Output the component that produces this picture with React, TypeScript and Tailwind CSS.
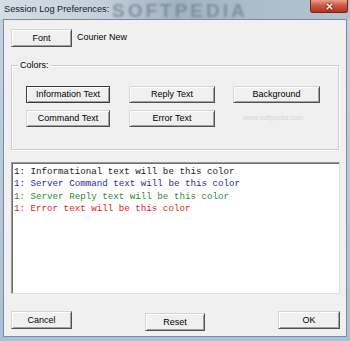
import { X } from 'lucide-react'

const ui = { fontFamily: '"Liberation Sans", Arial, sans-serif' }
const mono = { fontFamily: '"Liberation Mono", "Courier New", monospace' }

const btn =
  'flex items-center justify-center bg-[#f0f0f0] border border-t-[#d4d4d4] border-l-[#d4d4d4] border-r-[#505050] border-b-[#505050] shadow-[inset_1px_1px_0_#ffffff,inset_-1px_-1px_0_#a0a0a0] text-[9px] leading-none text-black'

const focusBtn =
  'flex items-center justify-center bg-[#f0f0f0] border border-[#3c3c3c] shadow-[inset_1px_1px_0_#ffffff,inset_-1px_-1px_0_#a0a0a0] text-[9px] leading-none text-black'

const lines = [
  { text: '1: Informational text will be this color', color: 'text-[#1c1c1c]' },
  { text: '1: Server Command text will be this color', color: 'text-[#2a2aa6]' },
  { text: '1: Server Reply text will be this color', color: 'text-[#2f8c2f]' },
  { text: '1: Error text will be this color', color: 'text-[#e01c1c]' },
]

export default function App() {
  return (
    <div className="w-[350px] h-[341px] flex flex-col bg-[linear-gradient(180deg,#c2d2e2,#a9c0d8)] overflow-hidden" style={ui}>
      {/* title bar */}
      <div className="relative h-[19px] shrink-0 flex items-center pl-[4px] bg-[linear-gradient(90deg,#d4dee7_0%,#c2cfda_30%,#a2b2c0_50%,#aebdca_75%,#b4c3d0_100%)]">
        <div className="absolute left-[112px] top-[1px] text-[19px] leading-none tracking-[3px] font-bold text-[#6c7d8d] blur-[1.2px] opacity-70 select-none">
          SOFTPEDIA
        </div>
        <span className="relative text-[9.2px] text-[#1a1a1a]">Session Log Preferences:</span>
        <div className="absolute right-[2px] top-0 w-[38px] h-[13px] rounded-b-[3px] border border-t-0 border-[#6e2a20] bg-[linear-gradient(180deg,#e7a08f_0%,#cf5a44_45%,#b8301f_100%)] flex items-center justify-center">
          <X size={9} strokeWidth={4} className="text-white drop-shadow-[0_0_1px_#3a0a05]" />
        </div>
      </div>

      {/* client */}
      <div className="relative mx-[3px] h-[318px] shrink-0 bg-[#f0f0f0] border border-[#7d8b98] flex flex-col">
        <div className="mt-[9px] ml-[7px] flex items-center h-[18px]">
          <button className={`${btn} w-[61px] h-[18px]`}>Font</button>
          <span className="ml-[5px] text-[9px] text-black">Courier New</span>
        </div>

        <div className="relative mt-[18px] ml-[7px] w-[328px] h-[85px] border border-[#cdcdcd] shadow-[inset_1px_1px_0_#ffffff,1px_1px_0_#ffffff] pl-[14px] pt-[20px] flex flex-col gap-[7px]">
          <span className="absolute -top-[6px] left-[6px] px-[2px] bg-[#f0f0f0] text-[9px] leading-[11px] text-black">Colors:</span>
          <div className="flex">
            <button className={`${focusBtn} w-[84px] h-[17px]`}>Information Text</button>
            <button className={`${btn} ml-[19px] w-[86px] h-[17px]`}>Reply Text</button>
            <button className={`${btn} ml-[18px] w-[87px] h-[17px]`}>Background</button>
          </div>
          <div className="flex items-center">
            <button className={`${btn} w-[84px] h-[17px]`}>Command Text</button>
            <button className={`${btn} ml-[19px] w-[86px] h-[17px]`}>Error Text</button>
            <span className="ml-[28px] text-[7px] text-[#d6d6d6] select-none">www.softpedia.com</span>
          </div>
        </div>

        <div className="mt-[12px] ml-[7px] w-[329px] h-[132px] bg-white border border-t-[#9a9a9a] border-l-[#9a9a9a] border-r-[#e0e0e0] border-b-[#e0e0e0] shadow-[inset_1px_1px_0_#6f6f6f] pt-[3px] pl-[2px]" style={mono}>
          {lines.map((l) => (
            <div key={l.text} className={`text-[9.2px] leading-[12.3px] whitespace-pre ${l.color}`}>
              {l.text}
            </div>
          ))}
        </div>

        <div className="mt-[17px] ml-[7px] w-[329px] flex items-start justify-between">
          <button className={`${btn} w-[61px] h-[18px]`}>Cancel</button>
          <button className={`${btn} mt-[2px] w-[60px] h-[18px]`}>Reset</button>
          <button className={`${btn} w-[62px] h-[18px]`}>OK</button>
        </div>
      </div>
    </div>
  )
}
